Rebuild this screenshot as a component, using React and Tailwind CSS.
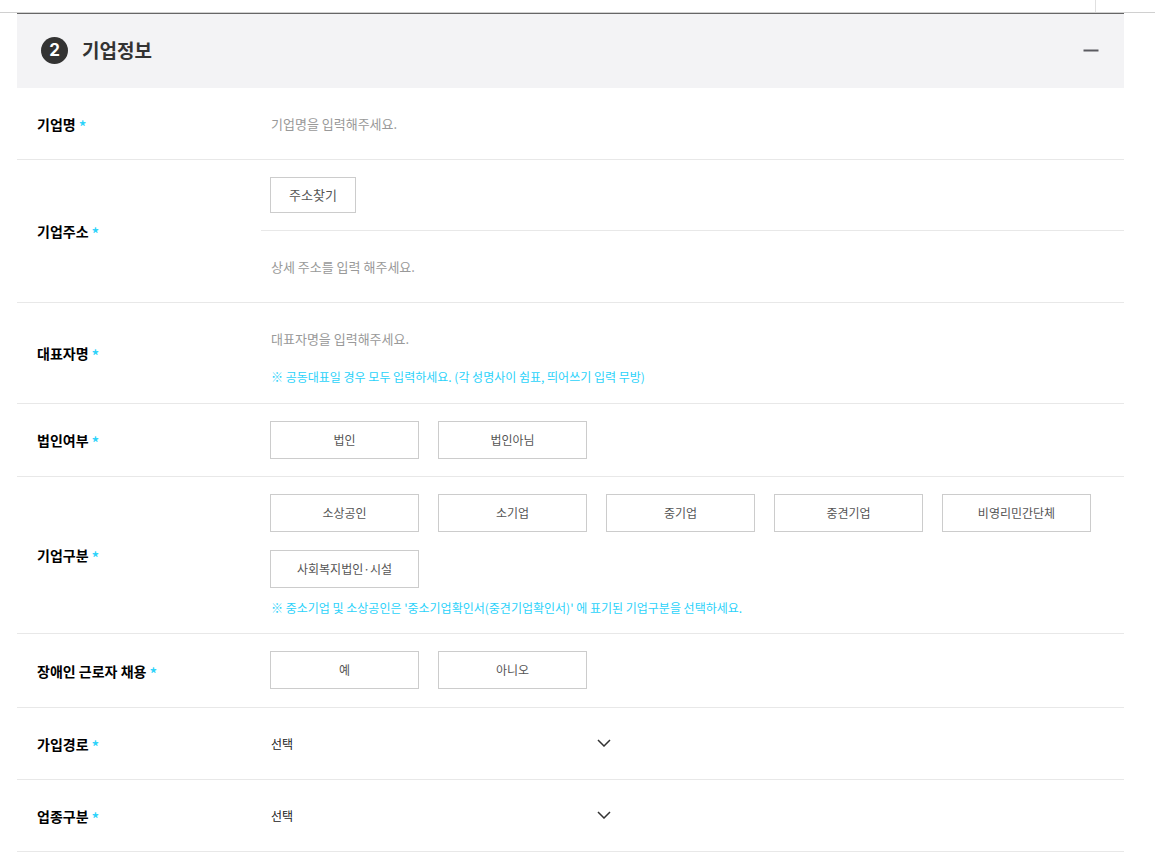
import { useState } from 'react';

const CORPORATE_OPTIONS = ['법인', '법인아님'];
const COMPANY_TYPES = ['소상공인', '소기업', '중기업', '중견기업', '비영리민간단체', '사회복지법인·시설'];
const YES_NO = ['예', '아니오'];

const JOIN_PATHS = ['인터넷 검색', '지인 추천', '기타'];
const INDUSTRIES = ['제조업', '도소매업', '서비스업', '기타'];

function Required() {
  return <span className="ml-[3px] align-[-3px] text-[16px] leading-none font-medium text-[#2bd2fa]">*</span>;
}

function FormRow({ label, htmlFor, children }) {
  const labelStyle = 'text-[14px] leading-5 font-bold text-black';

  return (
    <div className="flex border-b border-[#e8e8e8]">
      <div className="flex w-[244px] shrink-0 items-center pl-5">
        {htmlFor ? (
          <label htmlFor={htmlFor} className={labelStyle}>{label}<Required /></label>
        ) : (
          <span className={labelStyle}>{label}<Required /></span>
        )}
      </div>
      <div className="min-w-0 flex-1">{children}</div>
    </div>
  );
}

function TextField({ id, placeholder, ...rest }) {
  return (
    <input
      id={id}
      type="text"
      placeholder={placeholder}
      className="block h-[37px] w-full bg-transparent px-px text-[13px] text-[#333] outline-none placeholder:text-[#999]"
      {...rest}
    />
  );
}

function ChoiceGroup({ label, options }) {
  const [selected, setSelected] = useState(null);

  return (
    <div role="group" aria-label={label} className="flex flex-wrap gap-x-[19px] gap-y-[18px]">
      {options.map((option) => (
        <button
          key={option}
          type="button"
          aria-pressed={selected === option}
          onClick={() => setSelected(option)}
          className="h-[38px] w-[149px] cursor-pointer border border-[#ccc] bg-white text-[12px] text-[#555] aria-pressed:border-[#2bd2fa] aria-pressed:text-[#2bd2fa]"
        >
          {option}
        </button>
      ))}
    </div>
  );
}

function SelectField({ id, options }) {
  return (
    <div className="relative w-[350px] max-w-full">
      <select id={id} className="block h-[37px] w-full appearance-none bg-transparent px-px text-[12px] text-[#222] outline-none">
        <option value="">선택</option>
        {options.map((option) => (
          <option key={option}>{option}</option>
        ))}
      </select>
      <svg
        className="pointer-events-none absolute top-[14px] right-[9px]"
        width="14"
        height="8"
        viewBox="0 0 14 8"
        fill="none"
        stroke="#333"
        strokeWidth="1.5"
      >
        <path d="M1 1l6 6 6-6" />
      </svg>
    </div>
  );
}

function Note({ children }) {
  return <p className="mt-[10px] px-px text-[12px] leading-5 text-[#2bd2fa]">{children}</p>;
}

export default function App() {
  const [open, setOpen] = useState(true);

  return (
    <div className="bg-white font-['Noto_Sans_CJK_KR',sans-serif]">
      {/* Bottom edge of the site header */}
      <div className="flex h-[13px] justify-end border-b border-[#d0d0d0]">
        <div className="w-[60px] border-l border-[#e0e0e0]" />
      </div>

      <section className="mr-[31px] ml-[17px]">
        <div className="flex h-[75px] items-center border-t border-[#666] bg-[#f3f3f5] pr-[25px] pb-0.5 pl-6">
          <span className="flex size-[27px] items-center justify-center rounded-full bg-[#333] font-[Inter,sans-serif] text-[17px] leading-none font-bold text-white">
            2
          </span>
          <h2 className="ml-[14px] text-[19px] leading-7 font-bold text-[#333]">기업정보</h2>
          <button
            type="button"
            aria-label="기업정보 접기"
            aria-expanded={open}
            onClick={() => setOpen(!open)}
            className="ml-auto cursor-pointer"
          >
            <svg width="16" height="16" viewBox="0 0 16 16" fill="none" stroke="#5a5a60" strokeWidth="2">
              <path d="M0.5 8.5h15" />
            </svg>
          </button>
        </div>

        {open && (
          <form onSubmit={(e) => e.preventDefault()}>
            <FormRow label="기업명" htmlFor="company-name">
              <div className="py-[17px] pl-[9px]">
                <TextField id="company-name" placeholder="기업명을 입력해주세요." />
              </div>
            </FormRow>

            <FormRow label="기업주소" htmlFor="address-detail">
              <div className="border-b border-[#e8e8e8] py-[17px] pl-[9px]">
                <button
                  type="button"
                  className="block h-[36px] w-[86px] cursor-pointer border border-[#ccc] bg-white text-[13px] text-[#555]"
                >
                  주소찾기
                </button>
              </div>
              <div className="py-[17px] pl-[9px]">
                <TextField id="address-detail" placeholder="상세 주소를 입력 해주세요." />
              </div>
            </FormRow>

            <FormRow label="대표자명" htmlFor="ceo-name">
              <div className="pt-[17px] pb-4 pl-[9px]">
                <TextField id="ceo-name" placeholder="대표자명을 입력해주세요." />
                <Note>※ 공동대표일 경우 모두 입력하세요. (각 성명사이 쉼표, 띄어쓰기 입력 무방)</Note>
              </div>
            </FormRow>

            <FormRow label="법인여부">
              <div className="py-[17px] pl-[9px]">
                <ChoiceGroup label="법인여부" options={CORPORATE_OPTIONS} />
              </div>
            </FormRow>

            <FormRow label="기업구분">
              <div className="pt-[17px] pb-[15px] pl-[9px]">
                <ChoiceGroup label="기업구분" options={COMPANY_TYPES} />
                <Note>※ 중소기업 및 소상공인은 '중소기업확인서(중견기업확인서)' 에 표기된 기업구분을 선택하세요.</Note>
              </div>
            </FormRow>

            <FormRow label="장애인 근로자 채용">
              <div className="pt-[17px] pb-[18px] pl-[9px]">
                <ChoiceGroup label="장애인 근로자 채용" options={YES_NO} />
              </div>
            </FormRow>

            <FormRow label="가입경로" htmlFor="join-path">
              <div className="py-[17px] pl-[9px]">
                <SelectField id="join-path" options={JOIN_PATHS} />
              </div>
            </FormRow>

            <FormRow label="업종구분" htmlFor="industry">
              <div className="py-[17px] pl-[9px]">
                <SelectField id="industry" options={INDUSTRIES} />
              </div>
            </FormRow>
          </form>
        )}
      </section>
    </div>
  );
}
